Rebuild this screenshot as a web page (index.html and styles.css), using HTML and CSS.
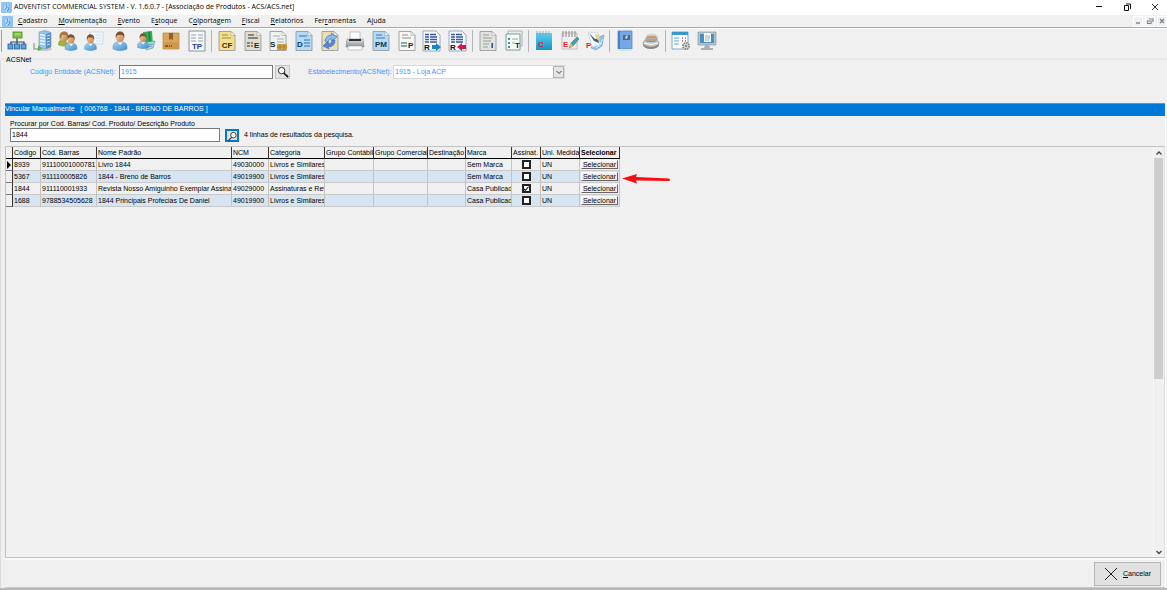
FILE: index.html
```html
<!DOCTYPE html>
<html lang="pt-BR">
<head>
<meta charset="utf-8">
<title>ADVENTIST COMMERCIAL SYSTEM</title>
<link rel="stylesheet" href="styles.css">
</head>
<body>
<svg class="defs" aria-hidden="true">
  <defs>
    <linearGradient id="blue" x1="0" y1="0" x2="1" y2="1"><stop offset="0" stop-color="#a9d6f6"/><stop offset="1" stop-color="#3f8ccb"/></linearGradient>
    <linearGradient id="skin" x1="0" y1="0" x2="1" y2="1"><stop offset="0" stop-color="#f6d0a2"/><stop offset="1" stop-color="#bd7f4a"/></linearGradient>
    <linearGradient id="sky" x1="0" y1="0" x2="0" y2="1"><stop offset="0" stop-color="#5fd0ee"/><stop offset="1" stop-color="#1593c8"/></linearGradient>
    <linearGradient id="steel" x1="0" y1="0" x2="0" y2="1"><stop offset="0" stop-color="#e4e6e8"/><stop offset="1" stop-color="#858b90"/></linearGradient>
    <symbol id="logo" viewBox="0 0 11 11"><rect width="11" height="11" rx="1" fill="#8fc3f5"/><path d="M4 2h3l1 4-3 4-2-3z" fill="#b9dcfb"/><path d="M5 2l1 3-2 3M7 5l1 2-2 2" fill="none" stroke="#4b8fd8"/></symbol>
    <symbol id="paper" viewBox="0 0 20 22"><path d="M2 1.500h12l4 4v15H2z" stroke="#8d9294" stroke-width=".8"/><path d="M14 1.500v4h4z" fill="#fff" stroke="#999" stroke-width=".6"/></symbol>
    <symbol id="person" viewBox="0 0 15 20"><path d="M.500 18c-.5-5 2-7.500 7-7.500s7.500 2.500 7 7.500q-7 3.500-14 0z" fill="url(#blue)" stroke="#5b91be" stroke-width=".5"/><path d="M5 10.500l2.500 4 3-4z" fill="#f4f8fc"/><ellipse cx="7.500" cy="6.500" rx="4" ry="5" fill="url(#skin)"/><path d="M3.300 7C2.500 1.500 6 0 8.500.5S12.500 3 11.700 7L10 4 5 4z" fill="#7d5232"/></symbol>
    <symbol id="sheet" viewBox="0 0 20 22"><path d="M1 1h13l4 4v16H1z" fill="#f7faff" stroke="#7e99b5" stroke-width=".8"/><path d="M3 4.500h4m1 0h6M3 7h4m1 0h7M3 9.500h4m1 0h7M3 12h4m1 0h7" stroke="#3b58a0" stroke-width="1.300"/></symbol>
  </defs>
</svg>
<div class="window">
  <header class="titlebar">
    <svg class="logo"><use href="#logo"/></svg>
    <h1 class="title">ADVENTIST COMMERCIAL SYSTEM - V. 1.6.0.7 - [Associação de Produtos - ACS/ACS.net]</h1>
    <div class="controls">
      <button class="control" aria-label="Minimizar"><svg viewBox="0 0 8 8"><path d="M1 3.500h6" stroke="#111"/></svg></button>
      <button class="control" aria-label="Restaurar"><svg viewBox="0 0 8 8"><path d="M1.500 2.500h4v5h-4zM3 1h4.500v5" fill="none" stroke="#111"/></svg></button>
      <button class="control" aria-label="Fechar"><svg viewBox="0 0 8 8"><path d="M1 1l6 6M7 1L1 7" stroke="#222" stroke-width=".9"/></svg></button>
    </div>
  </header>
  <nav class="menubar" aria-label="Menu">
    <svg class="logo"><use href="#logo"/></svg>
    <div class="menus">
      <button class="menu"><u>C</u>adastro</button>
      <button class="menu"><u>M</u>ovimentação</button>
      <button class="menu"><u>E</u>vento</button>
      <button class="menu">E<u>s</u>toque</button>
      <button class="menu">C<u>o</u>lportagem</button>
      <button class="menu"><u>F</u>iscal</button>
      <button class="menu"><u>R</u>elatórios</button>
      <button class="menu">Fer<u>r</u>amentas</button>
      <button class="menu">A<u>j</u>uda</button>
    </div>
    <div class="child-controls">
      <button class="child-control" aria-label="Minimizar janela"><svg viewBox="0 0 8 8"><path d="M2 6h4" stroke="#78889a" stroke-width="1.500"/></svg></button>
      <button class="child-control" aria-label="Restaurar janela"><svg viewBox="0 0 8 8"><path d="M1.500 4h3.500v2.500H1.500zM3 2h4v3" fill="none" stroke="#78889a" stroke-width="1.200"/></svg></button>
      <button class="child-control" aria-label="Fechar janela"><svg viewBox="0 0 8 8"><path d="M2 2l4 4M6 2L2 6" stroke="#78889a" stroke-width="1.500"/></svg></button>
    </div>
  </nav>

  <div class="toolbar" role="toolbar" aria-label="Ferramentas">
    <span class="grip"></span>
    <div class="tools tools-main">
      <button class="tool" aria-label="Organograma"><svg viewBox="0 0 20 22"><path d="M10 8v4M4 15v-3h13v3M10 12v3" fill="none" stroke="#354653" stroke-width="1.200"/><rect x="6" y="2" width="9" height="6" fill="#7cc63a" stroke="#557f29" stroke-width=".8"/><path d="M7.500 4h6" stroke="#c9e89c"/><g fill="#5ba2e0" stroke="#285e96" stroke-width=".8"><rect x="1" y="14" width="5" height="5"/><rect x="7.500" y="14" width="5" height="5"/><rect x="14" y="14" width="5" height="5"/></g></svg></button>
      <button class="tool" aria-label="Empresas"><svg viewBox="0 0 20 22"><ellipse cx="11" cy="19" rx="8" ry="2" fill="#c3cad0"/><path d="M6 2l6-1.500 6 2V17l-7 2-5-1.500z" fill="#8fc4f0" stroke="#6d8ba5" stroke-width=".5"/><path d="M13 4v15l5-2V2.500z" fill="#5a8ec0"/><path d="M7 4.500l5 1M7 7.500l5 1M7 10.500l5 1M7 13.500l5 1" stroke="#edf8ff" stroke-width="1.300"/><path d="M14 6l3-1m-3 4l3-1m-3 4l3-1m-3 4l3-1" stroke="#c9e3f8"/><path d="M1 13v6h5" fill="none" stroke="#a2a9ad" stroke-width="1.500"/><path d="M5 15l4 4-4 2z" fill="#65b03d"/></svg></button>
      <button class="tool" aria-label="Clientes"><svg viewBox="0 0 20 22"><path d="M0 15c0-5 3-6 6-6l6 6q-6 3-12 0" fill="#98b445"/><ellipse cx="6" cy="7" rx="3.500" ry="4.500" fill="url(#skin)"/><path d="M2 10C0 3 4 1 7 1.500s4 3 3 7L8 5 4 5z" fill="#a67a3c"/><use href="#person" x="6" y="4" width="14" height="17"/></svg></button>
      <button class="tool" aria-label="Contatos"><svg viewBox="0 0 20 22"><path d="M6 2h13v12H6z" fill="#f1f6fb" stroke="#bfd2e2" stroke-width=".7"/><path d="M12 5h5m-5 3h5m-5 3h5" stroke="#d3e0ea"/><use href="#person" x="0" y="4" width="13" height="17"/></svg></button>
      <button class="tool" aria-label="Pessoa"><svg viewBox="0 0 20 22"><use href="#person" x="2" y="1" width="16" height="20"/></svg></button>
      <button class="tool" aria-label="Evento"><svg viewBox="0 0 20 22"><path d="M7 2l9-1 1 14-7 2z" fill="#35ad55"/><path d="M13 1.500l1 13" stroke="#1d7d42" stroke-width="1.500"/><path d="M11 12l8-1-2 7-7 2z" fill="#a6d9df" stroke="#548e98" stroke-width=".6"/><path d="M11 15l6-1m-6 3l5-1" stroke="#4e96b8" stroke-width=".8"/><use href="#person" x="1" y="3" width="12" height="16"/></svg></button>
      <button class="tool" aria-label="Produtos"><svg viewBox="0 0 20 22"><path d="M2 3h16v16H2z" fill="#dba75d" stroke="#b5823f" stroke-width=".7"/><path d="M8 3h4v7l-2-1-2 1z" fill="#8d6131"/><path d="M2.500 12h15v6.500h-15z" fill="#cf984d"/><path d="M4 16h3m1 0h1m1 0h1" stroke="#6d4926" stroke-width="1.500"/></svg></button>
      <button class="tool" aria-label="TP"><svg viewBox="0 0 20 22"><path d="M2 1h16v20H2z" fill="#f5f7f8" stroke="#899299"/><path d="M4 5h5m2 0h5M4 8h5m2 0h5M4 11h5m2 0h5" stroke="#b8bfc5" stroke-width="1.500"/><text class="tag" x="10" y="19" text-anchor="middle" fill="#253e96">TP</text></svg></button>
    </div>
    <span class="separator"></span>
    <div class="tools tools-docs">
      <button class="tool" aria-label="CF"><svg viewBox="0 0 20 22"><use href="#paper" fill="#f4df8c"/><path d="M5 5h6M5 8h9" stroke="#baa65b" stroke-width="1.500"/><text class="tag" x="10" y="18" text-anchor="middle" fill="#342b13">CF</text></svg></button>
      <button class="tool" aria-label="E"><svg viewBox="0 0 20 22"><use href="#paper" fill="#dedccf"/><path d="M5 5h6M5 8h10M4 13h3m1 0h2M4 16h3m1 0h2" stroke="#68675f" stroke-width="1.500"/><text class="tag" x="11" y="18" fill="#222">E</text></svg></button>
      <button class="tool" aria-label="S"><svg viewBox="0 0 20 22"><use href="#paper" fill="#edf3f1"/><path d="M5 6h7M9 9h7M9 12h7" stroke="#9db0ac"/><text class="tag" x="2" y="17" fill="#222">S</text><path d="M9 14h10v6H9z" fill="#d29d43"/><path d="M12 14v6m4-6v6M9 17h10" stroke="#a87628" stroke-width=".7"/></svg></button>
      <button class="tool" aria-label="D"><svg viewBox="0 0 20 22"><use href="#paper" fill="#b5daf8"/><path d="M5 6h8M10 10h6m-6 3h6m-6 3h6" stroke="#5b95c5" stroke-width="1.400"/><text class="tag" x="3" y="17" fill="#123957">D</text></svg></button>
      <button class="tool" aria-label="Atualizar"><svg viewBox="0 0 20 22"><use href="#paper" fill="#eadfb4"/><path d="M5 11q1-6 7-6l-1-2 6 4-5 4v-2q-4-1-4 5z" fill="#8abcf5" stroke="#426fc0" stroke-width=".7"/><path d="M15 10q0 7-7 7l1 2-6-3 5-5v3q4 0 4-4z" fill="#5686dc" stroke="#315fb3" stroke-width=".5"/></svg></button>
      <button class="tool" aria-label="Imprimir"><svg viewBox="0 0 20 22"><path d="M5 10V2h10v8" fill="#fff" stroke="#aaa" stroke-width=".7"/><path d="M2 9h16l1 8H1z" fill="url(#steel)" stroke="#888" stroke-width=".6"/><path d="M4 9h12v2H4z" fill="#303337"/><path d="M3 16h14v4H3z" fill="#fafafa" stroke="#aaa" stroke-width=".6"/></svg></button>
      <button class="tool" aria-label="PM"><svg viewBox="0 0 20 22"><use href="#paper" fill="#b4daf5"/><path d="M5 5h6M5 8h9" stroke="#5c9dcb" stroke-width="1.300"/><text class="tag" x="10" y="17" text-anchor="middle" fill="#17384f">PM</text></svg></button>
      <button class="tool" aria-label="P"><svg viewBox="0 0 20 22"><use href="#paper" fill="#f7f6f2"/><path d="M5 5h6M5 8h9" stroke="#91918a"/><path d="M4 13h6m-6 3h6" stroke="#4c9696" stroke-width="1.700"/><text class="tag" x="11" y="18" fill="#252525">P</text></svg></button>
      <button class="tool" aria-label="R avançar"><svg viewBox="0 0 20 22"><use href="#sheet"/><text class="tag" x="2" y="20" fill="#111">R</text><path d="M10 15h4v-2l5 4-5 4v-2h-4z" fill="#1787c6"/></svg></button>
      <button class="tool" aria-label="R voltar"><svg viewBox="0 0 20 22"><use href="#sheet"/><text class="tag" x="2" y="20" fill="#111">R</text><path d="M18 15h-4v-2l-5 4 5 4v-2h4z" fill="#d6194b"/></svg></button>
    </div>
    <span class="separator"></span>
    <div class="tools tools-pair">
      <button class="tool" aria-label="I"><svg viewBox="0 0 20 22"><use href="#paper" fill="#e2e2e1"/><path d="M5 5h6M5 8h9M5 11h8M5 14h6M5 17h5" stroke="#9b9b9b"/><text class="tag" x="13" y="18" fill="#222">I</text></svg></button>
      <button class="tool" aria-label="T"><svg viewBox="0 0 20 22"><path d="M4 1h14v15H4z" fill="#e9eee9" stroke="#a1b7b4"/><path d="M2 4h14v16H2z" fill="#f6faf8" stroke="#7d9c9b"/><path d="M4 9h2m-2 4h2m-2 4h2" stroke="#498d88" stroke-width="2"/><path d="M8 9h6m-6 4h3" stroke="#94aaa7"/><text class="tag" x="11" y="18" fill="#222">T</text></svg></button>
    </div>
    <span class="separator"></span>
    <div class="tools tools-three">
      <button class="tool" aria-label="C"><svg viewBox="0 0 20 22"><path d="M2 3h16v17H2z" fill="url(#sky)"/><path d="M3 1v5m3-5v5m3-5v5m3-5v5m3-5v5" stroke="#7ea7b8" stroke-width=".9"/><text class="tag" x="4" y="17" fill="#e5142d">C</text></svg></button>
      <button class="tool" aria-label="E"><svg viewBox="0 0 20 22"><path d="M2 3h15v16H2z" fill="#eff0ef" stroke="#a0a0a0" stroke-width=".6"/><path d="M3 1v6m3-6v6m3-6v6m3-6v6m3-6v6" stroke="#888"/><text class="tag" x="3" y="17" fill="#ee172c">E</text><path d="M9 18l2-5 6-6 2 2-6 7z" fill="#4a9fa4" stroke="#376468" stroke-width=".5"/><path d="M9 18l2-5 2 3z" fill="#edbb6c"/></svg></button>
      <button class="tool" aria-label="P"><svg viewBox="0 0 20 22"><path d="M12 8l7-3-2 11-6 4-5-2z" fill="#8ec4ea" stroke="#5a93c0" stroke-width=".5"/><path d="M13 17l5-8m-7 9l6-5" stroke="#d7ecfa"/><path d="M3 2l10 1 2 12-8 2z" fill="#f5faff" stroke="#b5cde0" stroke-width=".6"/><path d="M4 3l6 6 3-1 1 5-5-2z" fill="#405f7c"/><path d="M10 4l4 1 1 4-3 1z" fill="#ecd276"/><text class="tag" x="1" y="18" fill="#ee172c">P</text></svg></button>
    </div>
    <span class="separator"></span>
    <div class="tools tools-pair">
      <button class="tool" aria-label="Livro"><svg viewBox="0 0 20 22"><path d="M3 1h14v18H3z" fill="#74a8e6" stroke="#4f82c2" stroke-width=".7"/><path d="M3 1h2v18H3z" fill="#4b7fc0"/><path d="M3 19h14v2H3z" fill="#d9e6f2"/><path d="M8 5h7v5H8z" fill="#4a6a90"/><path d="M11 9V6h2m-2 1.500h1.500" stroke="#fff" stroke-width=".8" fill="none"/></svg></button>
      <button class="tool" aria-label="Moedas"><svg viewBox="0 0 20 22"><ellipse cx="10" cy="15" rx="8" ry="4" fill="#858585"/><ellipse cx="10" cy="13" rx="8" ry="4" fill="#c7c6c3" stroke="#888" stroke-width=".6"/><path d="M4 10q1-7 7-7 5 0 6 6l-3 3H6z" fill="url(#steel)"/><path d="M6 7h9" stroke="#e9883a" stroke-width="1.500"/><path d="M5 10h10" stroke="#c9a58a"/><path d="M3 13q7 3 14 0" fill="none" stroke="#fff"/></svg></button>
    </div>
    <span class="separator"></span>
    <div class="tools tools-pair">
      <button class="tool" aria-label="Configurações"><svg viewBox="0 0 20 22"><path d="M1 2h16v17H1z" fill="#f9fbfc" stroke="#6597b9" stroke-width=".8"/><path d="M1 2h16v3H1z" fill="#3999ce"/><path d="M3 8h5m-5 3h5m-5 3h5" stroke="#90c3e3" stroke-width="1.500"/><path d="M11 8h1m2 0h1m-4 3h1m2 0h1" stroke="#db554e" stroke-width="1.500"/><circle cx="15" cy="16" r="3" fill="#e7e7e7" stroke="#888" stroke-width="2" stroke-dasharray="1.500 .8"/><circle cx="15" cy="16" r="1.200" fill="#888"/></svg></button>
      <button class="tool" aria-label="Computador"><svg viewBox="0 0 20 22"><path d="M1 2h18v13H1z" fill="#b9c3ca" stroke="#8b98a1" stroke-width=".7"/><path d="M3 4h14v9H3z" fill="#4c8fc4"/><path d="M7 3h6l1 1v8H7z" fill="#f5f9fc"/><path d="M8 6h5m-5 2h5m-5 2h4" stroke="#98b5ca"/><path d="M8 15h4l1 3H7zM4 18h12v2H4z" fill="#a7b0b5"/></svg></button>
    </div>
  </div>

  <main class="content">
    <section class="entity">
      <h2 class="entity-title">ACSNet</h2>
      <div class="entity-fields">
        <label class="entity-label" for="entity">Codigo Entidade (ACSNet):</label>
        <input class="entity-input" id="entity" value="1915">
        <button class="lookup" aria-label="Pesquisar entidade"><svg viewBox="0 0 13 13"><circle cx="5" cy="5" r="3.500" fill="#fff" stroke="#222"/><path d="M7.500 7.500l4.500 4.500" stroke="#111" stroke-width="2"/><path d="M8.500 7.500l1.500 1.500" stroke="#d7c31d"/></svg></button>
        <label class="shop-label" for="shop">Estabelecimento(ACSNet):</label>
        <div class="shop">
          <select class="shop-select" id="shop"><option>1915 - Loja ACP</option></select>
          <span class="shop-arrow"><svg viewBox="0 0 8 8"><path d="M1.500 3L4 5.500 6.500 3" fill="none" stroke="#444"/></svg></span>
        </div>
      </div>
    </section>
    <section class="link-panel">
      <h2 class="panel-title">Vincular Manualmente &nbsp; [ 006768 - 1844 - BRENO DE BARROS ]</h2>
      <div class="search">
        <label class="search-label" for="search">Procurar por Cod. Barras/ Cod. Produto/ Descrição Produto</label>
        <div class="search-row">
          <input class="search-input" id="search" value="1844">
          <button class="search-button" aria-label="Pesquisar"><svg viewBox="0 0 12 12"><circle cx="7" cy="4.500" r="3" fill="#fff" stroke="#333"/><path d="M5 7l-3.500 3.500" stroke="#333" stroke-width="1.300"/></svg></button>
          <span class="search-result">4 linhas de resultados da pesquisa.</span>
        </div>
      </div>
      <div class="grid-area">
        <div class="grid-scroll">
          <table class="grid">
            <colgroup><col class="c-mark"><col class="c-code"><col class="c-bar"><col class="c-name"><col class="c-ncm"><col class="c-cat"><col class="c-gcont"><col class="c-gcom"><col class="c-dest"><col class="c-brand"><col class="c-sub"><col class="c-unit"><col class="c-pick"></colgroup>
            <thead><tr><th></th><th>Código</th><th>Cód. Barras</th><th>Nome Padrão</th><th>NCM</th><th>Categoria</th><th>Grupo Contábil</th><th>Grupo Comercial</th><th>Destinação</th><th>Marca</th><th>Assinat.</th><th>Uni. Medida</th><th class="strong">Selecionar</th></tr></thead>
            <tbody>
              <tr><th class="mark"><svg class="pointer" viewBox="0 0 5 8"><path d="M1 0l4 4-4 4z" fill="#000"/></svg></th><td>8939</td><td>91110001000781</td><td>Livro 1844</td><td>49030000</td><td>Livros e Similares</td><td></td><td></td><td></td><td>Sem Marca</td><td class="tick"><input type="checkbox" aria-label="Assinatura 8939"></td><td>UN</td><td class="pick"><button class="select-button">Selecionar</button></td></tr>
              <tr><th class="mark"></th><td>5367</td><td>911110005826</td><td>1844 - Breno de Barros</td><td>49019900</td><td>Livros e Similares</td><td></td><td></td><td></td><td>Sem Marca</td><td class="tick"><input type="checkbox" aria-label="Assinatura 5367"></td><td>UN</td><td class="pick"><button class="select-button">Selecionar</button><svg class="callout" viewBox="0 0 48 12"><path d="M0 5.500L15 1l-1 3 33 1.500q2 1 0 2.500l-33-.5 1 3z" fill="#f80d12"/></svg></td></tr>
              <tr><th class="mark"></th><td>1844</td><td>911110001933</td><td>Revista Nosso Amiguinho Exemplar Assinante</td><td>49029000</td><td>Assinaturas e Rev</td><td></td><td></td><td></td><td>Casa Publicad</td><td class="tick"><input type="checkbox" checked aria-label="Assinatura 1844"></td><td>UN</td><td class="pick"><button class="select-button">Selecionar</button></td></tr>
              <tr><th class="mark"></th><td>1688</td><td>9788534505628</td><td>1844 Principais Profecias De Daniel</td><td>49019900</td><td>Livros e Similares</td><td></td><td></td><td></td><td>Casa Publicad</td><td class="tick"><input type="checkbox" aria-label="Assinatura 1688"></td><td>UN</td><td class="pick"><button class="select-button">Selecionar</button></td></tr>
            </tbody>
          </table>
        </div>
        <div class="scrollbar">
          <button class="scroll-arrow" aria-label="Rolar para cima"><svg viewBox="0 0 8 8"><path d="M1.500 5.500L4 3l2.500 2.500" fill="none" stroke="#444" stroke-width="1.300"/></svg></button>
          <div class="track"><div class="thumb"></div></div>
          <button class="scroll-arrow" aria-label="Rolar para baixo"><svg viewBox="0 0 8 8"><path d="M1.500 3L4 5.500 6.500 3" fill="none" stroke="#444" stroke-width="1.300"/></svg></button>
        </div>
      </div>
      <footer class="actions">
        <button class="cancel"><svg viewBox="0 0 14 14"><path d="M1 1l12 12M13 1L1 13" stroke="#222"/></svg><span><u>C</u>ancelar</span></button>
      </footer>
    </section>
  </main>
</div>
</body>
</html>
```

FILE: styles.css
```css
* { box-sizing: border-box; }

body {
  margin: 0;
  background: #f0f0f0;
  color: #000;
  font: 7px/10px "Liberation Sans", Arial, sans-serif;
}

button, input, select {
  margin: 0;
  padding: 0;
  border: 0;
  border-radius: 0;
  background: none;
  color: inherit;
  font: inherit;
}

h1, h2 { margin: 0; font: inherit; }
svg { display: block; }
.defs { position: absolute; width: 0; height: 0; }

.window {
  display: flex;
  flex-direction: column;
  min-height: 100vh;
  border-bottom: 2px solid #b9b9b9;
}

.titlebar, .menubar {
  display: flex;
  align-items: center;
  font-family: "Open Sans", "Noto Sans", sans-serif;
}

.titlebar { height: 15px; padding-bottom: 1px; background: #fff; }
.logo { width: 11px; height: 11px; margin-left: 1px; flex: none; }
.title { margin-left: 2px; flex: 1; }
.controls { display: flex; gap: 20px; padding-right: 8px; }
.control, .control svg { width: 8px; height: 8px; }

.menubar { height: 13px; border-bottom: 1px solid #a9a9a9; }
.menubar .logo { margin-left: 2px; }
.menus { display: flex; gap: 11px; flex: 1; margin-left: 5px; }
.menu u { text-underline-offset: 1px; }
.child-controls { display: flex; gap: 2px; }
.child-control { width: 10px; height: 11px; border: 1px solid #fff; }

.toolbar {
  display: flex;
  align-items: center;
  height: 32px;
  padding: 0 0 5px 1px;
  border-top: 1px solid #fff;
  border-bottom: 2px solid #e8e8e8;
}

.grip { width: 1px; height: 22px; margin-right: 5px; background: #a0a0a0; }
.separator { width: 1px; height: 22px; margin: 0 5px 0 4px; background: #b5b5b5; }
.tools { display: flex; justify-content: space-between; }
.tools-main { width: 200px; }
.tools-docs { width: 251px; }
.tools-pair { width: 46px; }
.tools-three { width: 71px; }
.tool, .tool svg { width: 20px; height: 22px; }
.tag { font: bold 8px "Liberation Sans", Arial, sans-serif; }

.content {
  display: flex;
  flex-direction: column;
  flex: 1;
  padding: 0 1px 0 4px;
  border-left: 1px solid #dcdcdc;
}

.entity { height: 43px; color: #3399ff; }
.entity-title { height: 5px; line-height: 0; padding-left: 1px; color: #000; }
.entity-fields { display: flex; align-items: center; }
.entity-label { width: 88px; margin: 0 1px 0 25px; white-space: nowrap; }
.entity-input {
  width: 154px;
  height: 14px;
  padding: 0 1px 2px;
  border: 1px solid #7a7a7a;
  background: #fff;
}
.lookup {
  display: grid;
  place-items: center;
  width: 15px;
  height: 14px;
  margin-left: 2px;
  border: 1px solid #c4c4c4;
  background: #e3e3e3;
}
.lookup svg { width: 12px; height: 12px; }
.shop-label { width: 84px; margin: 0 1px 0 18px; white-space: nowrap; }
.shop { display: flex; width: 172px; height: 14px; border: 1px solid #d9d9d9; background: #fff; }
.shop-select { flex: 1; appearance: none; padding-left: 1px; }
.shop-arrow {
  display: grid;
  place-items: center;
  width: 11px;
  border: 1px solid #b4b4b4;
  background: #e5e5e5;
}
.shop-arrow svg { width: 8px; height: 8px; }

.link-panel { display: flex; flex-direction: column; flex: 1; border-right: 1px solid #fff; }
.panel-title { height: 13px; background: #0078d7; color: #fff; line-height: 10px; border-top: 1px solid #4f9bd4; }
.search { height: 30px; padding: 3px 0 0 5px; }
.search-label { display: block; line-height: 9px; }
.search-row { display: flex; align-items: center; }
.search-input { width: 210px; height: 14px; padding: 0 1px 2px; border: 1px solid #7a7a7a; background: #fff; }
.search-button {
  display: grid;
  place-items: center;
  width: 14px;
  height: 13px;
  margin: 0 5px;
  border: 2px solid #0078d7;
  background: #e1e1e1;
}
.search-button svg { width: 11px; height: 11px; }

.grid-area {
  display: flex;
  flex: 1;
  border: 1px solid #c2c2c2;
  border-right-color: #dedede;
}
.grid-scroll { flex: 1; min-width: 0; }
.grid { table-layout: fixed; width: 614px; border-collapse: separate; border-spacing: 0; }
.c-mark { width: 7px; }
.c-code { width: 28px; }
.c-bar { width: 56px; }
.c-name { width: 135px; }
.c-ncm { width: 37px; }
.c-cat { width: 56px; }
.c-gcont { width: 49px; }
.c-gcom { width: 54px; }
.c-dest { width: 38px; }
.c-brand { width: 46px; }
.c-sub { width: 29px; }
.c-unit { width: 39px; }
.c-pick { width: 40px; }
.grid th, .grid td {
  height: 12px;
  padding: 0 0 0 1px;
  overflow: hidden;
  border-right: 1px solid #c3c3c3;
  border-bottom: 1px solid #c9c9c9;
  text-align: left;
  font-weight: normal;
  line-height: 10px;
  white-space: nowrap;
}
.grid thead th { border-right-color: #333; border-bottom-color: #000; }
.grid thead .strong { font-weight: bold; }
.grid tbody tr:nth-child(even) td { background: #d7e5f3; }
.grid tbody .mark { padding: 0; border-right-color: #333; border-bottom-color: #777; }
.pointer { width: 5px; height: 8px; }
.grid .tick { padding: 0; }
.tick input {
  display: block;
  position: relative;
  width: 9px;
  height: 9px;
  margin: 0 auto;
  appearance: none;
  border: 2px solid #222;
  background: #fff;
}
.tick input:checked::before {
  content: "";
  display: block;
  height: 5px;
  background: #000;
  clip-path: polygon(0 40%, 40% 70%, 100% 0, 100% 30%, 40% 100%, 0 75%);
}
.grid .pick { position: relative; overflow: visible; }
.select-button {
  display: block;
  width: 37px;
  height: 9px;
  border: 1px solid #fff;
  border-right-color: #666;
  border-bottom-color: #666;
  background: #f0f0f0;
  line-height: 7px;
}
.callout { position: absolute; left: 42px; top: 2px; width: 48px; height: 12px; }

.scrollbar { display: flex; flex-direction: column; width: 11px; border-left: 1px solid #f7f7f7; }
.scroll-arrow { display: grid; place-items: center; height: 11px; }
.scroll-arrow svg { width: 8px; height: 8px; }
.track { flex: 1; }
.thumb { height: 57%; width: 9px; background: #cdcdcd; }

.actions {
  display: flex;
  justify-content: flex-end;
  align-items: center;
  height: 30px;
  padding-right: 4px;
  border-top: 2px solid #fafafa;
  border-bottom: 1px solid #c8c8c8;
}
.cancel {
  display: flex;
  align-items: center;
  justify-content: center;
  gap: 5px;
  width: 67px;
  height: 24px;
  border: 1px solid #b5b5b5;
  background: #e1e1e1;
}
.cancel svg { width: 14px; height: 14px; }
```
